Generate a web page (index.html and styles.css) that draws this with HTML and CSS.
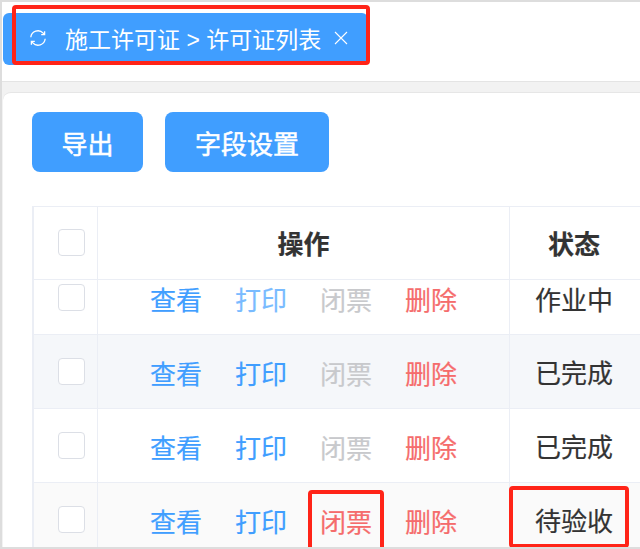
FILE: index.html
```html
<!DOCTYPE html>
<html lang="zh-CN">
<head>
  <meta charset="UTF-8" />
  <title>许可证列表</title>
  <link rel="stylesheet" href="styles.css">
</head>
<body>
  <div class="page">
    <div class="tab-bar">
      <div class="tab">
        <svg class="tab-refresh" width="18" height="18" viewBox="0 0 18 18" fill="none" stroke="#fff" stroke-width="1.3">
          <path d="M1.8 8.2a7.2 7.2 0 0 1 12.4-4.1l1.2 1.3"/>
          <path d="M16.2 9.8a7.2 7.2 0 0 1-12.4 4.1l-1.2-1.3"/>
          <path d="M15.6 2.2v3.4h-3.4"/>
          <path d="M2.4 15.8v-3.4h3.4"/>
        </svg>
        <span class="tab-title">施工许可证 &gt; 许可证列表</span>
        <svg class="tab-close" width="14" height="14" viewBox="0 0 14 14" stroke="#fff" stroke-width="1.1">
          <path d="M1 1l12 12M13 1L1 13"/>
        </svg>
      </div>
    </div>
    <div class="content">
      <div class="card">
        <div class="toolbar">
          <button class="btn btn-export">导出</button>
          <button class="btn btn-fields">字段设置</button>
        </div>
        <div class="table">
          <div class="row row-head">
            <div class="cell cell-check"><span class="checkbox"></span></div>
            <div class="cell cell-ops">操作</div>
            <div class="cell cell-status">状态</div>
          </div>
          <div class="row row-first">
            <div class="cell cell-check"><span class="checkbox"></span></div>
            <div class="cell cell-ops">
              <a class="link">查看</a>
              <a class="link link-light">打印</a>
              <a class="link link-off">闭票</a>
              <a class="link link-del">删除</a>
            </div>
            <div class="cell cell-status">作业中</div>
          </div>
          <div class="row row-stripe">
            <div class="cell cell-check"><span class="checkbox"></span></div>
            <div class="cell cell-ops">
              <a class="link">查看</a>
              <a class="link">打印</a>
              <a class="link link-off">闭票</a>
              <a class="link link-del">删除</a>
            </div>
            <div class="cell cell-status">已完成</div>
          </div>
          <div class="row">
            <div class="cell cell-check"><span class="checkbox"></span></div>
            <div class="cell cell-ops">
              <a class="link">查看</a>
              <a class="link">打印</a>
              <a class="link link-off">闭票</a>
              <a class="link link-del">删除</a>
            </div>
            <div class="cell cell-status">已完成</div>
          </div>
          <div class="row row-hover">
            <div class="cell cell-check"><span class="checkbox"></span></div>
            <div class="cell cell-ops">
              <a class="link">查看</a>
              <a class="link">打印</a>
              <a class="link link-del">闭票</a>
              <a class="link link-del">删除</a>
            </div>
            <div class="cell cell-status">待验收</div>
          </div>
        </div>
      </div>
    </div>
    <div class="mark mark-tab"></div>
    <div class="mark mark-close"></div>
    <div class="mark mark-status"></div>
  </div>
</body>
</html>
```

FILE: styles.css
```css
html, body {
  margin: 0;
  padding: 0;
  height: 100%;
  overflow: hidden;
}
body {
  font-family: "Liberation Sans", "Noto Sans CJK SC", sans-serif;
  background-color: #fff;
}
.page {
  position: relative;
  height: 549px;
  box-sizing: border-box;
  border-top: 2px solid #ddd;
  border-left: 2px solid #ddd;
  border-bottom: 2px solid #ddd;
  overflow: hidden;
}
.tab-bar {
  height: 80px;
  box-sizing: border-box;
  padding: 11px 0 0 1px;
  border-bottom: 1px solid #e4e4e4;
}
.tab {
  width: 365px;
  height: 52px;
  box-sizing: border-box;
  padding-left: 26px;
  padding-bottom: 2px;
  display: flex;
  align-items: center;
  background-color: #409eff;
  border-radius: 6px;
  color: #fff;
}
.tab-refresh {
  flex: none;
}
.tab-title {
  margin-left: 18px;
  font-size: 23px;
  white-space: nowrap;
}
.tab-close {
  flex: none;
  margin-left: 13px;
}
.content {
  height: 465px;
  box-sizing: border-box;
  padding: 10px 0 0 1px;
  background-color: #f2f2f2;
}
.card {
  height: 100%;
  box-sizing: border-box;
  padding: 19px 0 0 29px;
  background-color: #fff;
  border-radius: 8px 0 0 0;
  border-top: 1px solid #e6e6e6;
}
.toolbar {
  display: flex;
  gap: 22px;
  margin-bottom: 34px;
}
.btn {
  height: 60px;
  padding: 0;
  border: none;
  border-radius: 8px;
  background-color: #409eff;
  color: #fff;
  font-family: inherit;
  font-size: 26px;
  -webkit-text-stroke: 0.5px #fff;
}
.btn-export {
  width: 111px;
}
.btn-fields {
  width: 164px;
}
.table {
  border-left: 2px solid #ebeef5;
  border-top: 1px solid #ebeef5;
}
.row {
  display: flex;
  height: 74px;
  box-sizing: border-box;
  border-bottom: 1px solid #ebeef5;
}
.row-head {
  height: 73px;
}
.row-head .cell {
  font-size: 26px;
  font-weight: 700;
  padding-bottom: 2px;
}
.row-first {
  height: 55px;
}
.row-first .cell {
  padding-bottom: 18px;
}
.row-first .cell-check {
  padding-bottom: 20px;
}
.row-stripe {
  background-color: #f5f7fa;
}
.row-hover {
  background-color: #fafafa;
}
.cell {
  display: flex;
  align-items: center;
  justify-content: center;
  box-sizing: border-box;
  border-right: 1px solid #ebeef5;
  color: #333;
  font-size: 26px;
  -webkit-text-stroke: 0.2px;
}
.cell-check {
  width: 64px;
  flex: none;
  padding-left: 11px;
}
.cell-ops {
  width: 412px;
  flex: none;
  gap: 32px;
}
.cell-status {
  width: 131px;
  flex: none;
  border-right: none;
  padding-right: 3px;
}
.checkbox {
  display: block;
  width: 27px;
  height: 27px;
  box-sizing: border-box;
  border: 1px solid #dcdfe6;
  border-radius: 4px;
  background-color: #fff;
}
.link {
  color: #409eff;
  font-size: 26px;
  line-height: 30px;
  padding-top: 6px;
  width: 53px;
  text-align: center;
}
.link-light {
  color: #79bbff;
}
.link-off {
  color: #c8c9cc;
}
.link-del {
  color: #f56c6c;
}
.mark {
  position: absolute;
  box-sizing: border-box;
  border: 4px solid #ff2418;
  border-radius: 4px;
}
.mark-tab {
  left: 10px;
  top: 3px;
  width: 358px;
  height: 60px;
}
.mark-close {
  left: 306px;
  top: 488px;
  width: 76px;
  height: 61px;
}
.mark-status {
  left: 507px;
  top: 484px;
  width: 120px;
  height: 62px;
}
```
